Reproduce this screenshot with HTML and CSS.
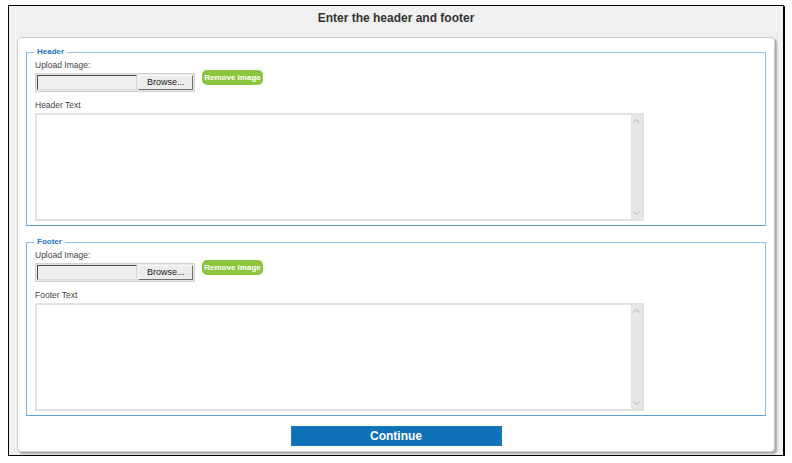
FILE: index.html
```html
<!DOCTYPE html>
<html>
<head>
<meta charset="utf-8">
<title>Enter the header and footer</title>
<link rel="stylesheet" href="styles.css">
</head>
<body>
<div class="frame">
  <div class="title">Enter the header and footer</div>
  <div class="card">
    <fieldset class="group">
      <legend>Header</legend>
      <div class="label">Upload Image:</div>
      <div class="upload-row">
        <div class="file"><span class="file-path"></span><span class="browse">Browse...</span></div>
        <button class="remove">Remove Image</button>
      </div>
      <div class="label text-label">Header Text</div>
      <div class="textbox">
        <textarea></textarea>
        <div class="scroll">
          <svg width="7" height="4" viewBox="0 0 7 4"><path d="M0.5 3.5 L3.5 0.5 L6.5 3.5" fill="none" stroke="#b0b0b0" stroke-width="1"/></svg>
          <svg width="7" height="4" viewBox="0 0 7 4"><path d="M0.5 0.5 L3.5 3.5 L6.5 0.5" fill="none" stroke="#b0b0b0" stroke-width="1"/></svg>
        </div>
      </div>
    </fieldset>
    <fieldset class="group footer-group">
      <legend>Footer</legend>
      <div class="label">Upload Image:</div>
      <div class="upload-row">
        <div class="file"><span class="file-path"></span><span class="browse">Browse...</span></div>
        <button class="remove">Remove Image</button>
      </div>
      <div class="label text-label">Footer Text</div>
      <div class="textbox">
        <textarea></textarea>
        <div class="scroll">
          <svg width="7" height="4" viewBox="0 0 7 4"><path d="M0.5 3.5 L3.5 0.5 L6.5 3.5" fill="none" stroke="#b0b0b0" stroke-width="1"/></svg>
          <svg width="7" height="4" viewBox="0 0 7 4"><path d="M0.5 0.5 L3.5 3.5 L6.5 0.5" fill="none" stroke="#b0b0b0" stroke-width="1"/></svg>
        </div>
      </div>
    </fieldset>
    <div class="actions">
      <button class="continue">Continue</button>
    </div>
  </div>
</div>
</body>
</html>
```
FILE: styles.css
```css
* { box-sizing: border-box; }
html, body {
  margin: 0;
  padding: 0;
  background: #ffffff;
  font-family: "Liberation Sans", Arial, sans-serif;
}
.frame {
  margin: 5px 0 0 8px;
  width: 776px;
  height: 451px;
  border: 1px solid #000;
  box-shadow: 1px 1px 0 #000;
  background: #f0f0f0;
}
.title {
  height: 31px;
  line-height: 24px;
  text-align: center;
  font-weight: bold;
  font-size: 12px;
  color: #333;
}
.card {
  margin: 0 8px;
  height: 415px;
  background: #fff;
  border: 1px solid #cdcdcd;
  border-radius: 4px;
  box-shadow: 2px 2px 2px rgba(0,0,0,0.3);
  padding: 9px 8px 0 8px;
}
.group {
  margin: 0;
  padding: 3px 8px 4px 8px;
  border: 1px solid #8ec4ec;
  border-left-color: #7ab3e4;
  border-bottom-color: #5f9fd8;
  min-width: 0;
}
.footer-group { margin-top: 11px; }
.group legend {
  font-size: 8px;
  line-height: 10px;
  font-weight: bold;
  color: #1f75c4;
  padding: 0 3px;
  margin-left: -1px;
}
.label {
  font-size: 8.5px;
  line-height: 11px;
  color: #444;
}
.text-label { margin-top: 8px; }
.upload-row {
  display: flex;
  align-items: flex-start;
  margin-top: 2px;
}
.file {
  display: flex;
  width: 160px;
  height: 19px;
  border: 1px solid #d2d2d2;
  background: #e8e8e8;
  padding: 1px;
  gap: 1px;
}
.file-path {
  width: 101px;
  height: 15px;
  background: #efefef;
  border: 1px solid;
  border-color: #4a4a4a #d8d8d8 #d8d8d8 #4a4a4a;
}
.browse {
  width: 55px;
  height: 15px;
  background: #ececec;
  border: 1px solid;
  border-color: #fafafa #707070 #707070 #fafafa;
  font-size: 9px;
  line-height: 13px;
  text-align: center;
  color: #222;
}
.remove {
  margin: -3px 0 0 7px;
  width: 61px;
  height: 15px;
  padding: 0;
  border: none;
  border-radius: 5px;
  background: #8cc63e;
  color: #fff;
  font-family: "Liberation Sans", Arial, sans-serif;
  font-size: 8px;
  font-weight: bold;
  line-height: 15px;
  text-align: center;
}
.textbox {
  display: flex;
  margin-top: 2px;
  width: 609px;
  height: 108px;
  border: 2px solid #e2e2e2;
  background: #fff;
}
.textbox textarea {
  flex: 1;
  border: none;
  outline: none;
  resize: none;
  margin: 0;
  padding: 2px;
  overflow: hidden;
  font-family: "Liberation Sans", Arial, sans-serif;
  font-size: 9px;
}
.scroll {
  width: 11px;
  background: #e6e6e6;
  display: flex;
  flex-direction: column;
  justify-content: space-between;
  align-items: center;
  padding: 4px 0 4px;
}
.scroll svg { display: block; }
.actions {
  display: flex;
  justify-content: center;
  margin-top: 10px;
}
.continue {
  width: 211px;
  height: 20px;
  padding: 0;
  border: 1px solid #1a7cc2;
  background: #0f72b9;
  color: #fff;
  font-family: "Liberation Sans", Arial, sans-serif;
  font-size: 12px;
  font-weight: bold;
  line-height: 18px;
}
```
